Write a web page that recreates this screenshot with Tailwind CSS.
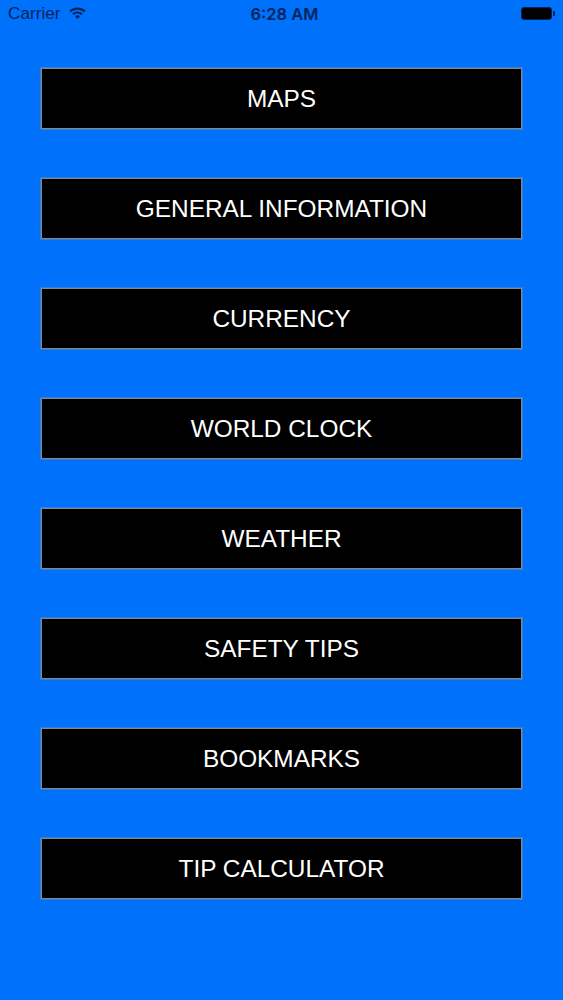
<!DOCTYPE html>
<html lang="en">
<head>
    <meta charset="UTF-8">
    <title>Travel Menu</title>
    <script src="https://cdn.jsdelivr.net/npm/@tailwindcss/browser@4"></script>
</head>
<body class="bg-[#0071fb] min-h-screen font-['Liberation_Sans',Arial,sans-serif]">
    <!-- Status bar -->
    <div class="relative flex items-center justify-between h-[28px] pl-[8px] pr-[8px] text-[#04245c]">
        <div class="flex items-center gap-[8px]">
            <span class="text-[17.2px]">Carrier</span>
            <svg width="17" height="13" viewBox="0 0 17 13" class="mb-[1px]" fill="#04245c">
                <path d="M8.5 0.5C5.3 0.5 2.5 1.7 0.4 3.7L1.9 5.3C3.6 3.7 5.9 2.7 8.5 2.7S13.4 3.7 15.1 5.3L16.6 3.7C14.5 1.7 11.7 0.5 8.5 0.5Z"/>
                <path d="M8.5 4.4C6.4 4.4 4.6 5.2 3.2 6.5L4.7 8.1C5.7 7.2 7 6.6 8.5 6.6S11.3 7.2 12.3 8.1L13.8 6.5C12.4 5.2 10.6 4.4 8.5 4.4Z"/>
                <path d="M8.5 8.2C7.5 8.2 6.6 8.6 5.9 9.2L8.5 12L11.1 9.2C10.4 8.6 9.5 8.2 8.5 8.2Z"/>
            </svg>
        </div>
        <span class="absolute left-0 right-0 pl-[6px] text-center font-['Inter',sans-serif] text-[16.5px] font-semibold pointer-events-none">6:28 AM</span>
        <div class="flex items-center gap-[1px] mb-[1px]">
            <div class="w-[31px] h-[13px] rounded-[3px] bg-black border border-[#04245c]"></div>
            <div class="w-[2px] h-[5px] rounded-r-[1px] bg-[#04245c]"></div>
        </div>
    </div>

    <!-- Menu buttons -->
    <div class="flex flex-col gap-[49px] pt-[40px] pl-[41px] pr-[41px]">
        <button class="h-[61px] pt-[2px] bg-black border border-[#7f8a97] shadow-[0_0_0_1px_rgba(110,140,180,0.45)] text-white text-[24.4px]">MAPS</button>
        <button class="h-[61px] pt-[2px] bg-black border border-[#7f8a97] shadow-[0_0_0_1px_rgba(110,140,180,0.45)] text-white text-[24.4px]">GENERAL INFORMATION</button>
        <button class="h-[61px] pt-[2px] bg-black border border-[#7f8a97] shadow-[0_0_0_1px_rgba(110,140,180,0.45)] text-white text-[24.4px]">CURRENCY</button>
        <button class="h-[61px] pt-[2px] bg-black border border-[#7f8a97] shadow-[0_0_0_1px_rgba(110,140,180,0.45)] text-white text-[24.4px]">WORLD CLOCK</button>
        <button class="h-[61px] pt-[2px] bg-black border border-[#7f8a97] shadow-[0_0_0_1px_rgba(110,140,180,0.45)] text-white text-[24.4px]">WEATHER</button>
        <button class="h-[61px] pt-[2px] bg-black border border-[#7f8a97] shadow-[0_0_0_1px_rgba(110,140,180,0.45)] text-white text-[24.4px]">SAFETY TIPS</button>
        <button class="h-[61px] pt-[2px] bg-black border border-[#7f8a97] shadow-[0_0_0_1px_rgba(110,140,180,0.45)] text-white text-[24.4px]">BOOKMARKS</button>
        <button class="h-[61px] pt-[2px] bg-black border border-[#7f8a97] shadow-[0_0_0_1px_rgba(110,140,180,0.45)] text-white text-[24.4px]">TIP CALCULATOR</button>
    </div>
</body>
</html>
